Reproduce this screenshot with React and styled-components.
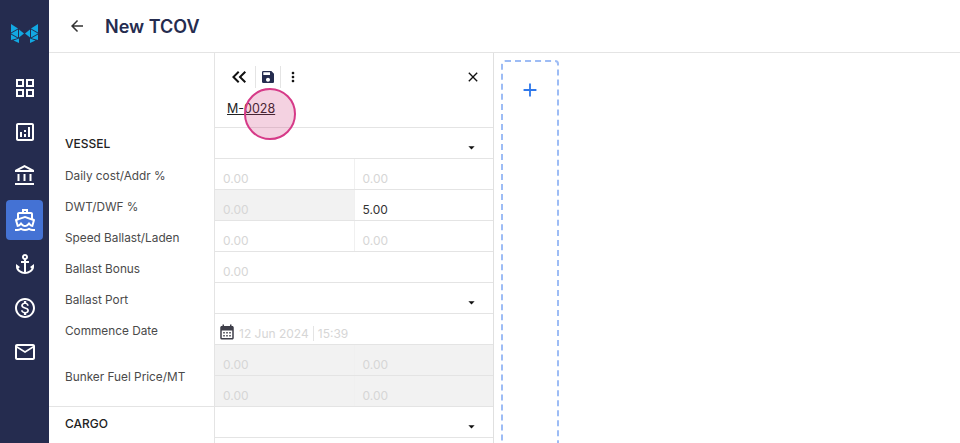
import React from "react";
import styled, { createGlobalStyle } from "styled-components";
import {
  MdOutlineGridView,
  MdOutlineAnalytics,
  MdOutlineAccountBalance,
  MdOutlineDirectionsBoat,
  MdAnchor,
  MdOutlineMonetizationOn,
  MdMailOutline,
  MdArrowBack,
  MdKeyboardDoubleArrowLeft,
  MdSave,
  MdMoreVert,
  MdClose,
  MdAdd,
  MdCalendarMonth,
  MdArrowDropDown,
} from "react-icons/md";

const GlobalStyle = createGlobalStyle`
  html, body {
    margin: 0;
    padding: 0;
    height: 100%;
    overflow: hidden;
    background: #fff;
    font-family: "Inter", "Liberation Sans", sans-serif;
  }
  #root { height: 100%; }
`;

const logoFacets = [
  "0,0 7,4.5 0,8.5",
  "0,9.5 7,5.5 7,13.5",
  "0,10.5 6.5,14.3 0,16",
  "8,5.5 13,9.5 8,13.5",
  "8,14.5 8,19 2.5,16.5",
];

const Logo = () => (
  <svg width="27" height="19" viewBox="0 0 27 19" fill="#12a8e2">
    {logoFacets.map((pts) => (
      <React.Fragment key={pts}>
        <polygon points={pts} />
        <polygon points={pts} transform="matrix(-1 0 0 1 27 0)" />
      </React.Fragment>
    ))}
  </svg>
);

const navIcons = [
  MdOutlineGridView,
  MdOutlineAnalytics,
  MdOutlineAccountBalance,
  MdOutlineDirectionsBoat,
  MdAnchor,
  MdOutlineMonetizationOn,
  MdMailOutline,
];

const labels = [
  { text: "VESSEL", head: true },
  { text: "Daily cost/Addr %" },
  { text: "DWT/DWF %" },
  { text: "Speed Ballast/Laden" },
  { text: "Ballast Bonus" },
  { text: "Ballast Port" },
  { text: "Commence Date" },
  { text: "Bunker Fuel Price/MT", tall: true },
];

const App = () => {
  return (
    <Page>
      <GlobalStyle />
      <Sidebar>
        <LogoWrap>
          <Logo />
        </LogoWrap>
        <Nav>
          {navIcons.map((Icon, i) => (
            <NavItem key={i} $active={i === 3}>
              <Icon size={24} />
            </NavItem>
          ))}
        </Nav>
      </Sidebar>
      <Main>
        <Header>
          <BackIcon>
            <MdArrowBack size={18} />
          </BackIcon>
          <Title>New TCOV</Title>
        </Header>
        <Content>
          <LabelColumn>
            <LabelGroup>
              {labels.map((l) => (
                <Label key={l.text} $head={l.head} $tall={l.tall}>
                  {l.text}
                </Label>
              ))}
            </LabelGroup>
            <Label $head $cargo>CARGO</Label>
          </LabelColumn>
          <Panel>
            <PanelTop>
              <Toolbar>
                <ToolButton>
                  <MdKeyboardDoubleArrowLeft size={24} />
                </ToolButton>
                <ToolButton $divided>
                  <MdSave size={16} color="#252c4f" />
                </ToolButton>
                <ToolButton>
                  <MdMoreVert size={16} />
                </ToolButton>
                <CloseButton>
                  <MdClose size={16} />
                </CloseButton>
              </Toolbar>
              <VoyageLink>M-0028</VoyageLink>
              <Pointer />
            </PanelTop>
            <SelectRow>
              <MdArrowDropDown size={15} />
            </SelectRow>
            <Row>
              <Cell $placeholder>0.00</Cell>
              <Cell $placeholder>0.00</Cell>
            </Row>
            <Row>
              <Cell $placeholder $disabled>0.00</Cell>
              <Cell>5.00</Cell>
            </Row>
            <Row>
              <Cell $placeholder>0.00</Cell>
              <Cell $placeholder>0.00</Cell>
            </Row>
            <Row>
              <Cell $placeholder>0.00</Cell>
            </Row>
            <SelectRow>
              <MdArrowDropDown size={15} />
            </SelectRow>
            <DateRow>
              <MdCalendarMonth size={18} color="#3f3f4a" />
              <DatePart>12 Jun 2024</DatePart>
              <DatePart $time>15:39</DatePart>
            </DateRow>
            <Row>
              <Cell $placeholder $disabled>0.00</Cell>
              <Cell $placeholder $disabled>0.00</Cell>
            </Row>
            <Row>
              <Cell $placeholder $disabled>0.00</Cell>
              <Cell $placeholder $disabled>0.00</Cell>
            </Row>
            <SelectRow>
              <MdArrowDropDown size={15} />
            </SelectRow>
            <Row />
          </Panel>
          <AddColumn>
            <AddCard>
              <MdAdd size={22} />
            </AddCard>
          </AddColumn>
        </Content>
      </Main>
    </Page>
  );
};

const Page = styled.div`
  display: flex;
  width: 960px;
  height: 443px;
  overflow: hidden;
`;

const Sidebar = styled.aside`
  width: 49px;
  flex-shrink: 0;
  background: #252c4f;
  display: flex;
  flex-direction: column;
  align-items: center;
`;

const LogoWrap = styled.div`
  height: 53px;
  padding-top: 24px;
  box-sizing: border-box;
  display: flex;
  justify-content: center;
`;

const Nav = styled.nav`
  display: flex;
  flex-direction: column;
  align-items: center;
  padding-top: 15px;
  gap: 4px;
`;

const NavItem = styled.div`
  width: 37px;
  height: 40px;
  border-radius: 4px;
  display: flex;
  align-items: center;
  justify-content: center;
  color: #fff;
  background: ${(p) => (p.$active ? "#4472d4" : "transparent")};
`;

const Main = styled.main`
  flex: 1;
  display: flex;
  flex-direction: column;
  min-width: 0;
`;

const Header = styled.header`
  height: 53px;
  flex-shrink: 0;
  box-sizing: border-box;
  border-bottom: 1px solid #e4e4e4;
  display: flex;
  align-items: center;
  padding-left: 19px;
`;

const BackIcon = styled.span`
  display: flex;
  color: #333;
  width: 37px;
`;

const Title = styled.h1`
  margin: 0;
  font-size: 18px;
  font-weight: 600;
  color: #252c4f;
`;

const Content = styled.div`
  flex: 1;
  display: flex;
  min-height: 0;
`;

const LabelColumn = styled.div`
  width: 166px;
  flex-shrink: 0;
  box-sizing: border-box;
  border-right: 1px solid #e4e4e4;
  padding-top: 75px;
  display: flex;
  flex-direction: column;
`;

const LabelGroup = styled.div`
  border-bottom: 1px solid #e4e4e4;
  display: flex;
  flex-direction: column;
  flex-shrink: 0;
`;

const Label = styled.div`
  height: ${(p) => (p.$tall ? "61px" : "31px")};
  flex-shrink: 0;
  box-sizing: border-box;
  padding: ${(p) => (p.$cargo ? "2px" : p.$head ? "0" : "2px")} 0 0 16px;
  display: flex;
  align-items: center;
  font-size: ${(p) => (p.$head ? "12px" : "11.8px")};
  font-weight: ${(p) => (p.$head ? 500 : 400)};
  color: ${(p) => (p.$head ? "#222" : "#4a4a4a")};
`;

const Panel = styled.section`
  width: 279px;
  flex-shrink: 0;
  box-sizing: border-box;
  border-right: 1px solid #e0e0e0;
  display: flex;
  flex-direction: column;
`;

const PanelTop = styled.div`
  position: relative;
  height: 75px;
  flex-shrink: 0;
  box-sizing: border-box;
  border-bottom: 1px solid #e4e4e4;
  padding: 13px 12px 0 8px;
`;

const Toolbar = styled.div`
  display: flex;
  align-items: center;
  height: 22px;
`;

const ToolButton = styled.span`
  display: flex;
  align-items: center;
  justify-content: center;
  height: 22px;
  padding: 0 4px;
  color: #111;
  ${(p) =>
    p.$divided &&
    `border-left: 1px solid #e4e4e4; border-right: 1px solid #e4e4e4;`}
`;

const CloseButton = styled(ToolButton)`
  margin-left: auto;
  margin-right: -4px;
`;

const VoyageLink = styled.a`
  display: inline-block;
  margin: 13px 0 0 4px;
  font-size: 12.5px;
  color: #222;
  text-decoration: underline;
`;

const Pointer = styled.div`
  position: absolute;
  left: 29px;
  top: 35px;
  width: 52px;
  height: 52px;
  box-sizing: border-box;
  border-radius: 50%;
  border: 2px solid #d63a88;
  background: rgba(205, 50, 120, 0.22);
  z-index: 2;
`;

const Row = styled.div`
  display: flex;
  height: 31px;
  flex-shrink: 0;
  box-sizing: border-box;
  border-bottom: 1px solid #e4e4e4;
`;

const SelectRow = styled(Row)`
  justify-content: flex-end;
  align-items: flex-end;
  padding: 0 14px 3px 0;
  color: #111;
`;

const Cell = styled.div`
  flex: 1;
  box-sizing: border-box;
  padding: 12px 0 0 8px;
  font-size: 12px;
  line-height: 15px;
  color: ${(p) => (p.$placeholder ? "#d6d6d6" : "#333")};
  background: ${(p) => (p.$disabled ? "#f2f2f2" : "transparent")};
  &:not(:last-child) {
    border-right: 1px solid #f0f0f0;
  }
`;

const DateRow = styled(Row)`
  align-items: flex-end;
  padding: 0 0 3px 3px;
  gap: 3px;
  color: #d6d6d6;
  font-size: 12px;
`;

const DatePart = styled.span`
  line-height: 15px;
  ${(p) =>
    p.$time && `border-left: 1px solid #e4e4e4; padding-left: 4px; margin-left: 1px;`}
`;

const AddColumn = styled.div`
  flex: 1;
  padding: 7px 0 0 7px;
`;

const AddCard = styled.div`
  width: 58px;
  height: 420px;
  box-sizing: border-box;
  border: 2px dashed #9dbcf5;
  border-radius: 4px;
  display: flex;
  justify-content: center;
  padding-top: 17px;
  color: #2f78ea;
`;

export default App;
